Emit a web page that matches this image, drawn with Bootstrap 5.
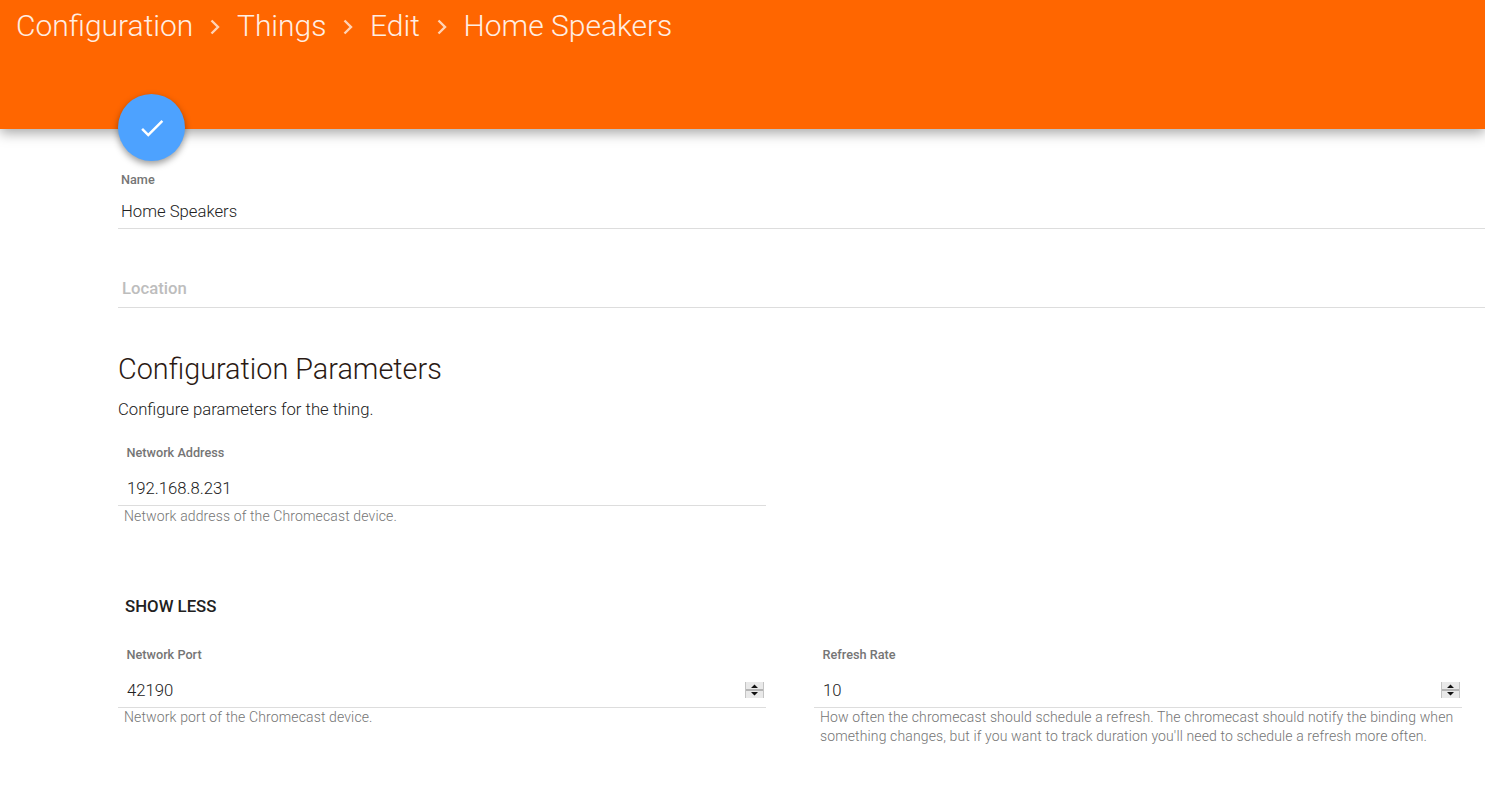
<!DOCTYPE html>
<html lang="en"><head><meta charset="utf-8"><title>Home Speakers</title>
<link href="https://cdn.jsdelivr.net/npm/bootstrap@5.3.0/dist/css/bootstrap.min.css" rel="stylesheet">
<style>
html,body{overflow:hidden}
body{font-family:Roboto,sans-serif;font-weight:300;color:#212121;background:#fff;height:793px}
.top-bar{height:129px;background:#ff6600;color:#fff;box-shadow:0 4px 12px rgba(0,0,0,.35);padding:7px 0 0 16px;position:relative;z-index:1}
.crumb{font-size:30px;line-height:38px;font-weight:300;color:#ffeee3}
.crumb svg{margin:2px 16.8px 0 16.8px}
.page-body{padding-left:118px}
.fab-btn{width:67px;height:67px;border-radius:50%;background:#4da2ff;box-shadow:0 3px 7px rgba(0,0,0,.4);margin-top:-35px;position:relative;z-index:2;border:0;padding:0}
.lbl{font-size:12.7px;font-weight:500;color:#757575;line-height:14px}
.val{font-size:16.7px;line-height:20px;color:#212121}
.line{border-bottom:1px solid #ddd}
.name-row{margin-top:12px;height:56px;padding-left:3px}
.name-val{margin-top:15px}
.loc-row{margin-top:24px;height:55px;padding:26px 0 0 4px;font-size:16.7px;font-weight:500;color:#bdbdbd;line-height:20px}
.sect-title{font-size:28.8px;font-weight:300;line-height:36px;margin:43px 0 0;color:#2b1a14}
.sect-sub{font-size:16.7px;line-height:20px;margin:13px 0 0}
.field-wrap{width:648px}
.field-lbl{padding-left:8.5px}
.field-val{padding:0 2px 0 9px;height:34px;margin-top:12px;display:flex;align-items:center;justify-content:space-between}
.hint{font-size:14px;line-height:19px;color:#757575;padding-left:6px;margin-top:1px;letter-spacing:.13px}
.two-col .hint{margin-top:0}
.addr-block{margin-top:26px}
.show-less{font-size:16.8px;font-weight:500;color:#212121;margin:70px 0 0 7px;line-height:20px}
.two-col{margin-top:32px;gap:48px}
.spin{display:block;margin-top:-2px}
</style></head><body>
<header class="top-bar">
  <div class="crumb d-flex align-items-center">
    <span>Configuration</span>
    <svg width="10" height="16" viewBox="0 0 10 16" fill="none" stroke="#ffd3b5" stroke-width="2.4"><path d="M1.500 1.500 8 8 1.500 14.500"/></svg>
    <span>Things</span>
    <svg width="10" height="16" viewBox="0 0 10 16" fill="none" stroke="#ffd3b5" stroke-width="2.4"><path d="M1.500 1.500 8 8 1.500 14.500"/></svg>
    <span>Edit</span>
    <svg width="10" height="16" viewBox="0 0 10 16" fill="none" stroke="#ffd3b5" stroke-width="2.4"><path d="M1.500 1.500 8 8 1.500 14.500"/></svg>
    <span>Home Speakers</span>
  </div>
</header>
<main class="page-body">
  <button class="fab-btn d-flex align-items-center justify-content-center" type="button" aria-label="Save">
    <svg width="30" height="30" viewBox="0 0 24 24" fill="#fff"><path d="M9 16.200 4.800 12l-1.400 1.400L9 19 21 7l-1.400-1.400z"/></svg>
  </button>
  <div class="name-row line">
    <div class="lbl">Name</div>
    <div class="val name-val">Home Speakers</div>
  </div>
  <div class="loc-row line">Location</div>
  <h2 class="sect-title">Configuration Parameters</h2>
  <p class="sect-sub">Configure parameters for the thing.</p>
  <div class="field-wrap addr-block">
    <div class="lbl field-lbl">Network Address</div>
    <div class="field-val line val">192.168.8.231</div>
    <div class="hint">Network address of the Chromecast device.</div>
  </div>
  <div class="show-less">SHOW LESS</div>
  <div class="two-col d-flex">
    <div class="field-wrap">
      <div class="lbl field-lbl">Network Port</div>
      <div class="field-val line val"><span>42190</span>
        <svg class="spin" width="19" height="16" viewBox="0 0 19 16"><rect width="19" height="16" fill="#e9e9e9"/><rect x="0" y="7" width="19" height="2" fill="#b4b4b4"/><rect x="0" y="0" width="1" height="16" fill="#c4c4c4"/><rect x="18" y="0" width="1" height="16" fill="#c4c4c4"/><path d="M9.500 2.500 13 6H6z M6 10h7l-3.500 3.500z" fill="#111"/></svg>
      </div>
      <div class="hint">Network port of the Chromecast device.</div>
    </div>
    <div class="field-wrap">
      <div class="lbl field-lbl">Refresh Rate</div>
      <div class="field-val line val"><span>10</span>
        <svg class="spin" width="19" height="16" viewBox="0 0 19 16"><rect width="19" height="16" fill="#e9e9e9"/><rect x="0" y="7" width="19" height="2" fill="#b4b4b4"/><rect x="0" y="0" width="1" height="16" fill="#c4c4c4"/><rect x="18" y="0" width="1" height="16" fill="#c4c4c4"/><path d="M9.500 2.500 13 6H6z M6 10h7l-3.500 3.500z" fill="#111"/></svg>
      </div>
      <div class="hint">How often the chromecast should schedule a refresh. The chromecast should notify the binding when something changes, but if you want to track duration you'll need to schedule a refresh more often.</div>
    </div>
  </div>
</main>
<script src="https://cdn.jsdelivr.net/npm/bootstrap@5.3.0/dist/js/bootstrap.bundle.min.js"></script>
</body></html>
